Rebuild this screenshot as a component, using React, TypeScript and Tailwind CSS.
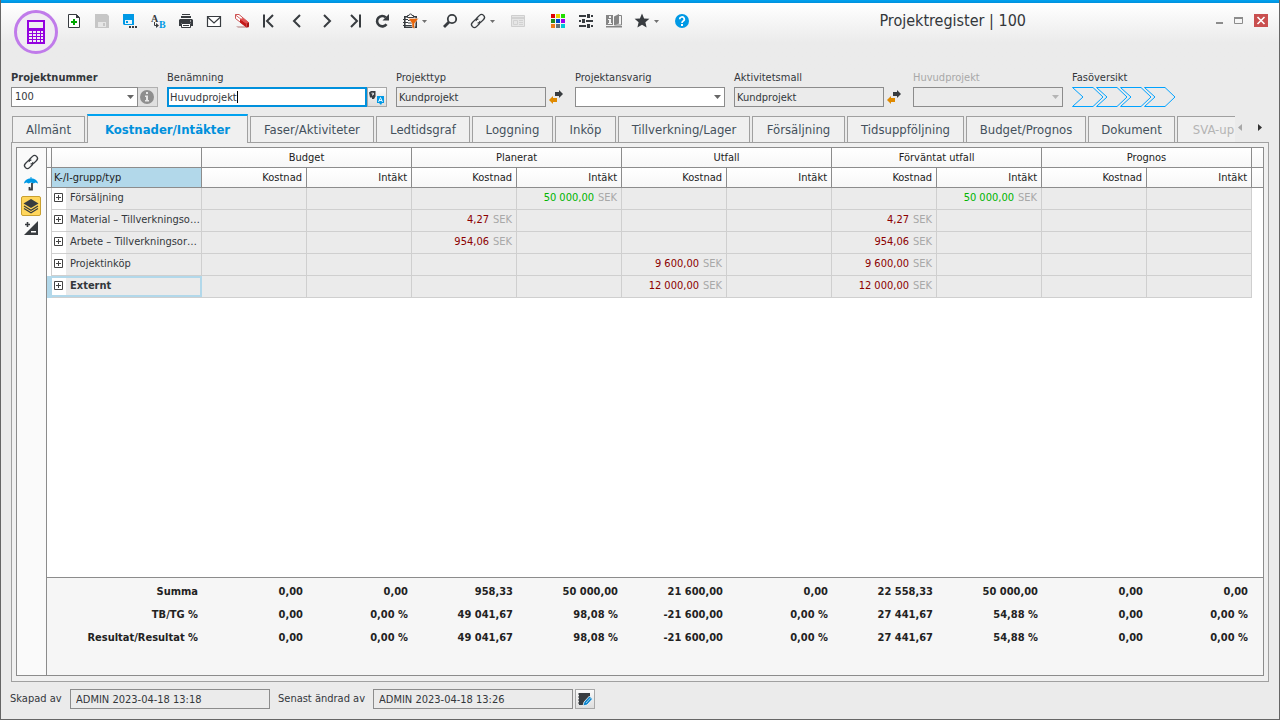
import React from "react";
import type { ReactNode } from "react";

const ink = "#383c40";
const blue = "#0099e5";

function Caret({ x, y = 8 }: { x: number; y?: number }) {
  return <path d={`M${x} ${y}h5l-2.5 3z`} fill="#707070" />;
}

function ChainShape({ x, y }: { x: number; y: number }) {
  return (
    <g transform={`translate(${x} ${y}) rotate(-45)`} fill="none" stroke={ink} strokeWidth="1.3">
      <path d="M1.2 1.2A2.9 2.9 0 0 1 -1.3 2.9H-5A2.9 2.9 0 0 1 -5 -2.9H-1.3A2.9 2.9 0 0 1 1.4 -.9" />
      <path d="M-1.2 -1.2A2.9 2.9 0 0 1 1.3 -2.9H5A2.9 2.9 0 0 1 5 2.9H1.3A2.9 2.9 0 0 1 -1.4 .9" />
    </g>
  );
}

type Tool = { label: string; wide?: boolean; disabled?: boolean; icon: ReactNode };

const tools: Tool[] = [
  {
    label: "Ny",
    icon: (
      <>
        <path d="M8.5 3.5h8l3 3v10h-11z" fill="#fff" stroke={ink} />
        <path d="M16 3v4h4z" fill={ink} />
        <path d="M13 8h2v2h2v2h-2v2h-2v-2h-2v-2h2z" fill="#00a800" />
      </>
    ),
  },
  {
    label: "Spara",
    disabled: true,
    icon: (
      <>
        <path d="M7 3h12l2 2v12H7z" fill="#c6c6c6" />
        <path d="M10 11h8v5h-8z" fill="#e6e6e6" />
        <path d="M15 12h2v3h-2z" fill="#c6c6c6" />
      </>
    ),
  },
  {
    label: "Spara som",
    icon: (
      <>
        <path d="M7 3h11v11H8l-1-1z" fill={blue} />
        <path d="M9 9h7v4H9z" fill="#e8f5fc" />
        <path d="M10 10h2v2h-2z" fill={blue} />
        <path d="M13 15h2v2h-2zM16 15h2v2h-2zM19 15h2v2h-2z" fill={ink} />
      </>
    ),
  },
  {
    label: "Byt namn",
    icon: (
      <>
        <text x="7" y="11" fontSize="10" fontWeight="700" fontFamily="Liberation Serif, serif" fill={ink}>A</text>
        <text x="15" y="17" fontSize="10" fontWeight="700" fontFamily="Liberation Serif, serif" fill={blue}>B</text>
        <path d="M10.500 11v3.500h3" fill="none" stroke={ink} />
        <path d="M12 12l3 2.500-3 2.500z" fill={ink} />
      </>
    ),
  },
  {
    label: "Skriv ut",
    icon: (
      <>
        <path d="M10 3h8v1h-8zM9 5h10v2H9zM8 8h12l1 1v6h-2v-3H9v3H7V9z" fill={ink} />
        <path d="M9.500 12.500h9v4h-9z" fill="#fff" stroke={ink} />
        <path d="M11 14h6v1h-6z" fill={ink} />
        <path d="M18 9.500h1v1h-1z" fill="#fff" />
      </>
    ),
  },
  {
    label: "E-post",
    icon: (
      <>
        <path d="M7.500 5.500h13v10h-13z" fill="#fff" stroke={ink} strokeWidth="1.200" />
        <path d="M7.500 6l6.500 6 6.500-6" fill="none" stroke={ink} strokeWidth="1.200" />
      </>
    ),
  },
  {
    label: "Radera",
    icon: (
      <>
        <path d="M8 15h10v2h-8z" fill="#d2b4b4" />
        <path d="M7.500 3.500h3.500l9.500 8v4.500h-2l-11-8.500z" fill="#fff" stroke="#c84040" strokeWidth=".9" />
        <path d="M7.500 4l11 8.500" stroke="#c84040" strokeWidth=".8" />
        <path d="M12 8l6.500 4.500V16.500L12 11.500z" fill="#c41818" />
        <path d="M12 8l3-1 6 4.500-2.500 1.500z" fill="#e05050" />
        <path d="M18.500 12.500l2.500-1v4l-2.500 1z" fill="#a80f0f" />
      </>
    ),
  },
  {
    label: "Första",
    icon: <path d="M8 3.500v13M17 4l-6 6 6 6" fill="none" stroke={ink} strokeWidth="2" />,
  },
  { label: "Föregående", icon: <path d="M16 4l-6 6 6 6" fill="none" stroke={ink} strokeWidth="2" /> },
  { label: "Nästa", icon: <path d="M12 4l6 6-6 6" fill="none" stroke={ink} strokeWidth="2" /> },
  {
    label: "Sista",
    icon: <path d="M20 3.500v13M11 4l6 6-6 6" fill="none" stroke={ink} strokeWidth="2" />,
  },
  {
    label: "Uppdatera",
    icon: (
      <>
        <path d="M18.500 13.200A5.200 5.200 0 1 1 17.800 6.400" fill="none" stroke={ink} strokeWidth="2.600" />
        <path d="M21 3v6.500h-6.500z" fill={ink} />
      </>
    ),
  },
  {
    label: "Urklipp",
    wide: true,
    icon: (
      <>
        <path d="M8.800 5.800h11.400v10.400H8.800z" fill="#fff" stroke={ink} strokeWidth="1.600" />
        <path d="M11.500 6.500v-2h1.500a1.500 1.500 0 0 1 3 0h1.500v2z" fill="#fff" stroke={ink} />
        <path d="M7 8h5v1H7zM7 11h5v1H7zM7 14h5v1H7zM12 9h4v1h-4zM12 11.500h4v1h-4zM12 14h4v1h-4z" fill={ink} />
        <path d="M12.500 7.500h10l-4 5V18l-2.500-2v-3.500z" fill="#e8650a" stroke="#ebebeb" strokeWidth=".5" />
        <Caret x={26} y={9} />
      </>
    ),
  },
  {
    label: "Sök",
    icon: (
      <>
        <circle cx="16" cy="8" r="4.200" fill="none" stroke={ink} strokeWidth="1.800" />
        <path d="M13 11l-5 5" stroke={ink} strokeWidth="2.800" />
      </>
    ),
  },
  {
    label: "Länkar",
    wide: true,
    icon: (
      <>
        <ChainShape x={14} y={10} />
        <Caret x={26} y={9} />
      </>
    ),
  },
  {
    label: "Layout",
    disabled: true,
    icon: (
      <>
        <path d="M7.500 4.500h13v11h-13z" fill="#e6e6e6" stroke="#cfcfcf" />
        <path d="M8 6h12v2H8z" fill="#d2d2d2" />
        <path d="M9.500 9.500h4v4h-4zM15 9.500h4M15 11.500h4M15 13.500h4" fill="none" stroke="#d2d2d2" />
      </>
    ),
  },
];

const swatches = ["#e00000", "#e0d000", "#22dd00", "#1e8a1e", "#0044cc", "#a000e8", "#f07818", "#647078", "#00c8d8"];

const moreTools: Tool[] = [
  {
    label: "Färger",
    icon: (
      <>
        {swatches.map((fill, i) => (
          <rect key={fill} x={7 + (i % 3) * 5} y={3 + Math.floor(i / 3) * 5} width="4" height="4" fill={fill} />
        ))}
      </>
    ),
  },
  {
    label: "Inställningar",
    icon: (
      <>
        <path d="M7 4h7v2H7zM19 4h2v2h-2zM7 9h2v2H7zM14 9h7v2h-7zM7 14h7v2H7zM19 14h2v2h-2z" fill={ink} />
        <path d="M15 3h3v4h-3zM10 8h3v4h-3zM15 13h3v4h-3z" fill={ink} />
      </>
    ),
  },
  {
    label: "Handbok",
    icon: (
      <>
        <path d="M6 4h7v10H6zM6 15h16v1.500H6z" fill="#858585" />
        <path d="M9 5h2v2H9zM8 8h3v4h1v1H8v-1h1V9H8z" fill="#f2f2f2" />
        <path d="M18 4.500h3.500v9.500H15" fill="#f2f2f2" stroke="#858585" />
        <path d="M14 5.500l5-2.500v9.500l-5 2z" fill="#858585" />
      </>
    ),
  },
  {
    label: "Favoriter",
    wide: true,
    icon: (
      <>
        <path d="M14 2.500l2.100 4.900 5.300.4-4 3.500 1.200 5.200-4.600-2.800-4.600 2.800 1.200-5.200-4-3.500 5.300-.4z" fill={ink} />
        <Caret x={26} y={9} />
      </>
    ),
  },
  {
    label: "Hjälp",
    icon: (
      <>
        <circle cx="14" cy="10" r="7" fill={blue} />
        <path d="M11.700 8.200a2.300 2.200 0 1 1 3.500 1.800c-.8.500-1.200.8-1.200 1.900" fill="none" stroke="#fff" strokeWidth="1.700" />
        <path d="M13 13h2v2h-2z" fill="#fff" />
      </>
    ),
  },
];

function ToolButton({ tool }: { tool: Tool }) {
  return (
    <button type="button" aria-label={tool.label} disabled={tool.disabled} className="shrink-0">
      <svg viewBox={tool.wide ? "0 0 40 20" : "0 0 28 20"} className={tool.wide ? "h-5 w-10" : "h-5 w-7"}>
        {tool.icon}
      </svg>
    </button>
  );
}

function Toolbar() {
  return (
    <header className="flex h-[66px] items-start bg-linear-to-b from-white to-[#ebebeb] to-60% pl-[13px]">
      <svg viewBox="0 0 44 44" className="mt-[7px] h-11 w-11 shrink-0">
        <circle cx="22" cy="22" r="20.500" fill="#f0ecf2" stroke="#c07bea" strokeWidth="3" />
        <path d="M13 10h18v24H13z" fill="#9400e0" />
        <path d="M15 12h14v6H15z" fill="#f0ecf2" />
        {[21, 24, 27, 30].map((y) =>
          [15, 19, 23, 27].map((x) => <rect key={`${x}-${y}`} x={x} y={y} width={x === 27 ? 2 : 3} height="2" fill="#f0ecf2" />)
        )}
      </svg>
      <nav aria-label="Verktyg" className="mt-2 ml-0.5 flex shrink-0">
        {tools.map((t) => (
          <ToolButton key={t.label} tool={t} />
        ))}
        <div className="flex pl-3">
          {moreTools.map((t) => (
            <ToolButton key={t.label} tool={t} />
          ))}
        </div>
      </nav>
      <h1 className="mt-1.5 ml-auto text-[16px] leading-6 whitespace-nowrap text-[#33373b]">Projektregister | 100</h1>
      <div className="mt-2 mr-[11px] ml-[186px] flex shrink-0 items-center gap-1">
        <button type="button" aria-label="Minimera">
          <svg viewBox="0 0 16 20" className="h-5 w-4"><path d="M4 11h7v2H4z" fill="#8c8c8c" /></svg>
        </button>
        <button type="button" aria-label="Maximera">
          <svg viewBox="0 0 16 20" className="h-5 w-4"><path d="M2.500 7v5.500h8V7" fill="none" stroke="#8c8c8c" /><path d="M2 6h9v2H2z" fill="#8c8c8c" /></svg>
        </button>
        <button type="button" aria-label="Stäng">
          <svg viewBox="0 0 16 20" className="h-5 w-4">
            <path d="M2 3h14v13H2z" fill="#c94f4f" />
            <path d="M5.500 6l7 7M12.500 6l-7 7" stroke="#fff" strokeWidth="1.600" />
          </svg>
        </button>
      </div>
    </header>
  );
}

function Field({ id, label, children, className = "" }: { id: string; label: string; children: ReactNode; className?: string }) {
  return (
    <div className="flex shrink-0 flex-col">
      <label htmlFor={id} className={`h-[18px] leading-[18px] ${className}`}>{label}</label>
      <div className="flex h-5">{children}</div>
    </div>
  );
}

function Select({ id, value, disabled = false, className }: { id: string; value: string; disabled?: boolean; className: string }) {
  return (
    <div className="relative flex">
      <select
        id={id}
        defaultValue={value}
        disabled={disabled}
        className={`h-5 appearance-none border border-[#8c8c8c] px-[3px] leading-4 ${disabled ? "bg-[#ebebeb]" : "bg-white"} ${className}`}
      >
        <option value={value}>{value}</option>
      </select>
      <svg viewBox="0 0 7 4" className="pointer-events-none absolute top-2 right-1 h-1 w-[7px]">
        <path d="M0 0h7L3.500 4z" fill={disabled ? "#b5b5b5" : "#666"} />
      </svg>
    </div>
  );
}

function SwapButton({ label }: { label: string }) {
  return (
    <button type="button" aria-label={label}>
      <svg viewBox="0 0 20 20" className="h-5 w-5">
        <path d="M9 5h4V3l4 4-4 4V9H9z" fill={ink} />
        <path d="M11 11H7V9l-4 4 4 4v-2h4z" fill="#e08a00" />
      </svg>
    </button>
  );
}

const readOnly = "h-5 border border-[#8c8c8c] bg-[#ebebeb] leading-4";
const smallButton = "h-5 w-5 border border-[#a8a8a8] bg-linear-to-b from-[#fafafa] to-[#dedede]";

function Fields() {
  return (
    <form className="flex gap-[9px] pl-2.5">
      <Field id="number" label="Projektnummer" className="font-bold">
        <Select id="number" value="100" className="w-[127px]" />
        <button type="button" aria-label="Information" className="h-5 w-5 border border-l-0 border-[#b0b0b0] bg-[#e0e0e0]">
          <svg viewBox="0 0 18 18" className="h-[18px] w-[18px]">
            <circle cx="9" cy="9" r="7" fill="#8e8e8e" />
            <path d="M8 4h2v2H8zM7 7.500h3V12h1v1.500H7V12h1V9H7z" fill="#e6e6e6" />
          </svg>
        </button>
      </Field>
      <Field id="name" label="Benämning">
        <div className="relative flex">
          <input id="name" defaultValue="Huvudprojekt" className="h-5 w-50 border-2 border-[#0090dc] bg-white px-px leading-4 outline-none" />
          <span className="absolute top-1 left-[70px] h-3 w-px bg-black" />
        </div>
        <button type="button" aria-label="Översätt" className={smallButton}>
          <svg viewBox="0 0 18 18" className="h-[18px] w-[18px]">
            <path d="M1 4.500l2-1.500h4.500v5.500L6 11H4V9.500H2z" fill={ink} />
            <path d="M3.500 5.200h2v1.300H4.500v1" fill="none" stroke="#fff" strokeWidth=".9" />
            <path d="M9 8h7v7h-2l-1 2-2-2H9z" fill={blue} />
            <path d="M10.500 14l2-4.500 2 4.500M11 12.500h3" fill="none" stroke="#fff" strokeWidth=".9" />
          </svg>
        </button>
      </Field>
      <Field id="type" label="Projekttyp">
        <input id="type" readOnly defaultValue="Kundprojekt" className={`w-[150px] px-0.5 ${readOnly}`} />
        <SwapButton label="Byt projekttyp" />
      </Field>
      <Field id="manager" label="Projektansvarig">
        <Select id="manager" value="" className="w-[150px]" />
      </Field>
      <Field id="template" label="Aktivitetsmall">
        <input id="template" readOnly defaultValue="Kundprojekt" className={`w-[150px] px-0.5 ${readOnly}`} />
        <SwapButton label="Byt aktivitetsmall" />
      </Field>
      <Field id="parent" label="Huvudprojekt" className="text-[#a8a8a8]">
        <Select id="parent" value="" disabled className="w-[150px]" />
      </Field>
      <div className="flex flex-col">
        <span className="h-[18px] leading-[18px]">Fasöversikt</span>
        <svg viewBox="0 0 105 20" className="h-5 w-[105px]" fill="none" stroke="#00a2ff">
          {[0, 24, 48, 72].map((x) => (
            <path key={x} d={`M${x + 0.5} .5h20.500L${x + 31} 10l-10 9.500H${x + 0.5}l10.500-9.500z`} />
          ))}
        </svg>
      </div>
    </form>
  );
}

const tabs = [
  { name: "Allmänt", width: "w-[73px]" },
  { name: "Kostnader/Intäkter", width: "w-[161px]" },
  { name: "Faser/Aktiviteter", width: "w-[124px]" },
  { name: "Ledtidsgraf", width: "w-[94px]" },
  { name: "Loggning", width: "w-[81px]" },
  { name: "Inköp", width: "w-[61px]" },
  { name: "Tillverkning/Lager", width: "w-[132px]" },
  { name: "Försäljning", width: "w-[93px]" },
  { name: "Tidsuppföljning", width: "w-[117px]" },
  { name: "Budget/Prognos", width: "w-[120px]" },
  { name: "Dokument", width: "w-[87px]" },
  { name: "SVA-up", width: "w-[73px]" },
];

function Tabs() {
  return (
    <div className="flex h-7 items-end">
      <div role="tablist" className="relative z-10 -mb-px flex h-[29px] min-w-0 flex-1 items-end gap-0.5 overflow-hidden pl-[11px] text-[13px] whitespace-nowrap">
        {tabs.map(({ name, width }, i) =>
          i === 1 ? (
            <button key={name} type="button" role="tab" aria-selected="true" className={`h-[29px] shrink-0 border-x border-t-2 border-x-[#a0a0a0] border-t-[#00a2f0] bg-[#f0f0f0] font-bold text-[#0090dc] ${width}`}>
              {name}
            </button>
          ) : (
            <button
              key={name}
              type="button"
              role="tab"
              aria-selected="false"
              disabled={i === 11}
              className={`h-[27px] shrink-0 border border-[#a0a0a0] bg-[#f0f0f0] ${i === 11 ? "text-[#b4b4b4]" : "text-[#44505c]"} ${width}`}
            >
              {name}
            </button>
          )
        )}
      </div>
      <div className="flex h-7 w-11 shrink-0 items-center">
        <button type="button" aria-label="Föregående flik" disabled>
          <svg viewBox="0 0 16 20" className="h-5 w-4"><path d="M7 6v7L3 9.500z" fill="#a8a8a8" /></svg>
        </button>
        <button type="button" aria-label="Nästa flik">
          <svg viewBox="0 0 20 20" className="h-5 w-5"><path d="M7 6v7l4-3.500z" fill="#333" /></svg>
        </button>
      </div>
    </div>
  );
}

function Sidebar() {
  const button = "flex h-5 w-5 items-center justify-center";
  return (
    <aside className="flex w-[30px] shrink-0 flex-col gap-0.5 border-r border-[#8c8c8c] bg-[#fafafa] pt-1 pl-1">
      <button type="button" aria-label="Länka" className={button}>
        <svg viewBox="0 0 18 18" className="h-[18px] w-[18px]"><ChainShape x={9} y={9} /></svg>
      </button>
      <button type="button" aria-label="Paraply" className={button}>
        <svg viewBox="0 0 18 18" className="h-[18px] w-[18px]">
          <path d="M2 8.500C2.500 5 5.500 3.500 8.500 3.500V2h1v1.500c3 0 6 1.500 6.500 5l-2.500-1-2 1L9 7.500 6.500 8.500l-2-1z" fill={blue} />
          <path d="M10 8v6.500H7.500V12" fill="none" stroke={ink} strokeWidth="1.800" />
        </svg>
      </button>
      <button type="button" aria-label="Lager" aria-pressed="true" className={`${button} rounded-xs border border-[#c9a030] bg-[#ffd65c]`}>
        <svg viewBox="0 0 18 18" className="h-[18px] w-[18px]">
          <path d="M9 2l7.500 4.500L9 11 1.500 6.500z" fill={ink} />
          <path d="M2 9l7 4.300L16 9M2 11.500l7 4.300 7-4.300" fill="none" stroke={ink} strokeWidth="1.200" />
        </svg>
      </button>
      <button type="button" aria-label="Tecken" className={button}>
        <svg viewBox="0 0 18 18" className="h-[18px] w-[18px]">
          <path d="M16 2v14H2z" fill={ink} />
          <path d="M9 12h5v1.500H9z" fill="#fff" />
          <path d="M5.500 3v5M3 5.500h5" stroke={ink} strokeWidth="1.600" />
        </svg>
      </button>
    </aside>
  );
}

const groups = ["Budget", "Planerat", "Utfall", "Förväntat utfall", "Prognos"];

type Row = { name: string; values: Record<number, string>; selected?: boolean };

const rows: Row[] = [
  { name: "Försäljning", values: { 3: "50 000,00", 7: "50 000,00" } },
  { name: "Material – Tillverkningso…", values: { 2: "4,27", 6: "4,27" } },
  { name: "Arbete – Tillverkningsor…", values: { 2: "954,06", 6: "954,06" } },
  { name: "Projektinköp", values: { 4: "9 600,00", 6: "9 600,00" } },
  { name: "Externt", values: { 4: "12 000,00", 6: "12 000,00" }, selected: true },
];

const totals: [string, string[]][] = [
  ["Summa", ["0,00", "0,00", "958,33", "50 000,00", "21 600,00", "0,00", "22 558,33", "50 000,00", "0,00", "0,00"]],
  ["TB/TG %", ["0,00", "0,00 %", "49 041,67", "98,08 %", "-21 600,00", "0,00 %", "27 441,67", "54,88 %", "0,00", "0,00 %"]],
  ["Resultat/Resultat %", ["0,00", "0,00 %", "49 041,67", "98,08 %", "-21 600,00", "0,00 %", "27 441,67", "54,88 %", "0,00", "0,00 %"]],
];

const columns = [0, 1, 2, 3, 4, 5, 6, 7, 8, 9];

function Columns() {
  return (
    <colgroup>
      <col className="w-[5px]" />
      <col className="w-[150px]" />
      {columns.map((c) => (
        <col key={c} className="w-[105px]" />
      ))}
      <col />
    </colgroup>
  );
}

function CostTable() {
  const head = "h-5 border-r border-b border-[#8c8c8c] bg-linear-to-b from-white to-[#f7f7f7] p-0 font-normal leading-4 text-[#222]";
  const cell = "border-r border-b border-[#cfcfcf] bg-[#ebebeb] p-0";
  return (
    <table className="w-full table-fixed border-separate border-spacing-0">
      <Columns />
      <thead>
        <tr>
          <th className={head} />
          <th className={head} />
          {groups.map((g) => (
            <th key={g} scope="colgroup" colSpan={2} className={head}>{g}</th>
          ))}
          <th className={`${head} border-r-0`} />
        </tr>
        <tr>
          <th className={head} />
          <th scope="col" className="h-5 border-r border-b border-[#8c8c8c] bg-[#b2d8ea] py-0 pr-0 pl-0.5 text-left leading-4 font-normal text-[#222]">K-/I-grupp/typ</th>
          {columns.map((c) => (
            <th key={c} scope="col" className={head}>
              <div className="pr-1 text-right">{c % 2 ? "Intäkt" : "Kostnad"}</div>
            </th>
          ))}
          <th className={`${head} border-r-0`} />
        </tr>
      </thead>
      <tbody>
        {rows.map((row) => (
          <tr key={row.name}>
            <td className={row.selected ? "bg-[#b2d8ea] p-0" : "border-r border-[#cfcfcf] bg-white p-0"} />
            <th scope="row" className={`${cell} text-left ${row.selected ? "font-bold" : "font-normal"}`}>
              <div className={`flex h-[21px] items-stretch whitespace-nowrap ${row.selected ? "-mr-px border-2 border-l-0 border-[#b2d8ea]" : ""}`}>
                <button type="button" aria-label={`Visa ${row.name}`} className={`flex w-3.5 shrink-0 justify-center bg-white pr-px ${row.selected ? "pt-[3px]" : "pt-[5px]"}`}>
                  <svg viewBox="0 0 9 9" className="h-[9px] w-[9px]">
                    <path d="M.5.5h8v8h-8zM2 4.500h5M4.500 2v5" fill="none" stroke="#444" />
                  </svg>
                </button>
                <span className={`pl-1 ${row.selected ? "leading-4" : "leading-5"}`}>{row.name}</span>
              </div>
            </th>
            {columns.map((c) => (
              <td key={c} className={`${cell} text-right`}>
                {row.values[c] && (
                  <div className="flex h-[21px] justify-end gap-1 pr-1 leading-5">
                    <span className={c % 2 ? "text-[#00b400]" : "text-[#8b0000]"}>{row.values[c]}</span>
                    <span className="text-[#a8a8a8]">SEK</span>
                  </div>
                )}
              </td>
            ))}
            <td />
          </tr>
        ))}
      </tbody>
    </table>
  );
}

function Totals() {
  return (
    <div className="min-h-[98px] border-t border-[#8c8c8c] bg-[#f6f6f6] pt-[3px]">
      <table className="w-full table-fixed border-separate border-spacing-0 font-bold text-[#222]">
        <Columns />
        <tbody>
          {totals.map(([name, values]) => (
            <tr key={name} className="h-[23px]">
              <td className="p-0" />
              <th scope="row" className="py-0 pr-1 pl-0 text-right whitespace-nowrap">{name}</th>
              {values.map((v, i) => (
                <td key={i} className="py-0 pr-1 pl-0 text-right whitespace-nowrap">{v}</td>
              ))}
              <td className="p-0" />
            </tr>
          ))}
        </tbody>
      </table>
    </div>
  );
}

function StatusBar() {
  return (
    <footer className="flex items-center pt-[7px] pr-2 pb-[10px] pl-[9px]">
      <label htmlFor="created" className="w-[60px] shrink-0 leading-5">Skapad av</label>
      <input id="created" readOnly defaultValue="ADMIN 2023-04-18 13:18" className={`w-50 px-[5px] ${readOnly}`} />
      <label htmlFor="changed" className="ml-2 w-[95px] shrink-0 leading-5">Senast ändrad av</label>
      <input id="changed" readOnly defaultValue="ADMIN 2023-04-18 13:26" className={`w-50 px-[5px] ${readOnly}`} />
      <button type="button" aria-label="Anteckningar" className={`ml-0.5 ${smallButton}`}>
        <svg viewBox="0 0 18 18" className="h-[18px] w-[18px]">
          <path d="M3 3h11v7l-5 5H3z" fill={ink} />
          <path d="M2 4h2M2 7h2M2 10h2M2 13h2" stroke={ink} />
          <path d="M7 16l1-4 5.500-6 3 3L11 15z" fill="#0a84cc" stroke="#fff" strokeWidth=".8" />
          <path d="M10 13l4.500-5" stroke="#bfe2f5" strokeWidth=".8" />
        </svg>
      </button>
    </footer>
  );
}

export default function App() {
  return (
    <div className="flex min-h-screen flex-col border-x border-b border-[#666] bg-[#ebebeb] font-['DejaVu_Sans_Condensed','DejaVu_Sans',sans-serif] text-[11px] text-[#33373b]">
      <div className="h-[3px] shrink-0 bg-linear-to-b from-[#00a2f0] to-[#0090dc]" />
      <Toolbar />
      <Fields />
      <div className="mt-[7px] flex flex-1 flex-col">
        <Tabs />
        <main className="mr-2.5 ml-2.5 flex flex-1 border border-[#a0a0a0] bg-[#f0f0f0] p-1 pb-[5px]">
          <div className="flex min-w-0 flex-1 border border-[#8c8c8c] bg-white">
            <Sidebar />
            <div className="flex min-w-0 flex-1 flex-col">
              <div className="flex-1">
                <CostTable />
              </div>
              <Totals />
            </div>
          </div>
        </main>
      </div>
      <StatusBar />
    </div>
  );
}
